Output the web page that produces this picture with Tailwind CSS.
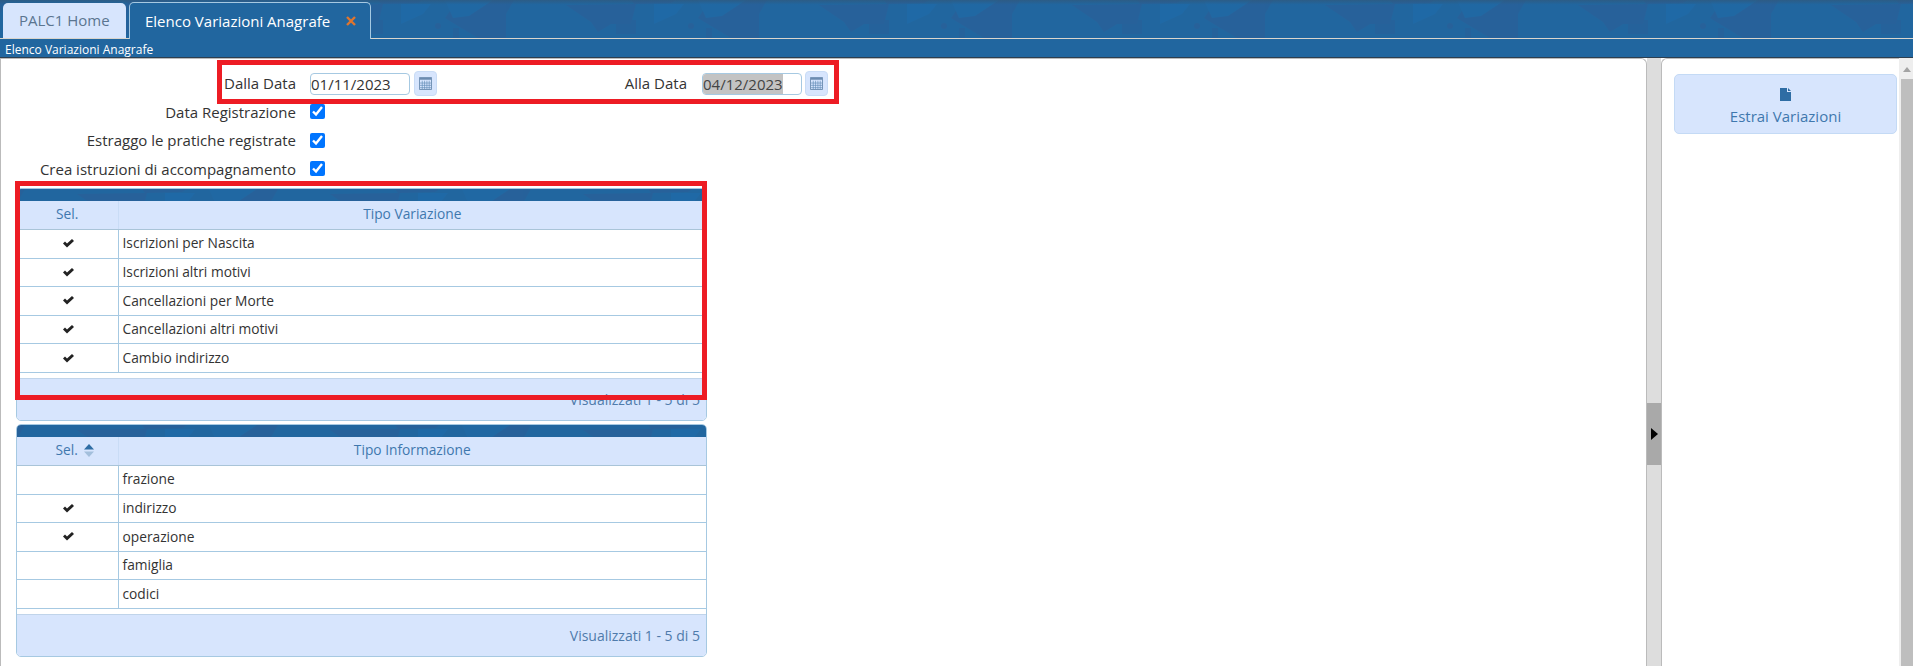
<!DOCTYPE html>
<html lang="it">
<head>
  <meta charset="UTF-8">
  <title>Elenco Variazioni Anagrafe</title>
  <script src="https://cdn.jsdelivr.net/npm/@tailwindcss/browser@4"></script>
</head>
<body class="h-[666px] w-full overflow-hidden bg-white font-['Open_Sans','Noto_Sans',sans-serif] text-[15px] text-[#333]">
  <!-- shared defs: banner texture, icons -->
  <svg width="0" height="0" class="absolute">
    <defs>
      <pattern id="tex" width="253" height="38" patternUnits="userSpaceOnUse">
        <rect width="253" height="38" fill="#21669f"/>
        <polygon points="0,0 8,0 0,14" fill="#26619a"/>
        <polygon points="60,5 130,4 125,24 105,24 92,32 85,22" fill="#27619a"/>
        <polygon points="125,0 170,0 165,3 128,4" fill="#27619a"/>
        <polygon points="110,20 130,20 130,34 110,34" fill="#27619a" opacity=".7"/>
        <polygon points="148,4 178,4 170,14 148,24" fill="#1f69a6"/>
        <polygon points="205,0 253,0 253,38 225,38 205,26 192,18" fill="#27619a"/>
        <polygon points="192,0 240,0 216,16 200,18" fill="#2068a3"/>
        <circle cx="185" cy="26" r="3" fill="#27619a"/>
        <rect x="200" y="28" width="6" height="10" fill="#27619a" opacity=".7"/>
      </pattern>
      <linearGradient id="shade" x1="0" y1="0" x2="0" y2="1">
        <stop offset="0" stop-color="#2f5a80" stop-opacity=".8"/>
        <stop offset=".12" stop-color="#2f5a80" stop-opacity="0"/>
      </linearGradient>
      <symbol id="ok" viewBox="0 0 11 9">
        <path d="M0 4.6 2 2.6 4 4.6 9 0 11 2 4 8.6Z" fill="#222"/>
      </symbol>
      <symbol id="cal" viewBox="0 0 14 14">
        <path d="M.5 .5h13v13H.5z" fill="#d7e5fd" stroke="#6b8bb0"/>
        <path d="M1 1h12v2H1z" fill="#6b8bb0"/>
        <path d="M1 6.500h12M1 9h12M1 11.500h12M3.500 4v9M6 4v9M8.500 4v9M11 4v9" stroke="#5f8ab5" stroke-width=".7" fill="none"/>
      </symbol>
    </defs>
  </svg>

  <header class="h-[58px] bg-[#21669f] border-b border-[#2d3f50]">
    <div class="relative h-[39px] border-b border-[#d9d5cd]">
      <svg class="absolute inset-0 w-full h-[38px]"><rect width="100%" height="38" fill="url(#tex)"/><rect width="100%" height="38" fill="url(#shade)"/></svg>
      <div class="relative flex items-end gap-[3px] h-[39px] pl-[3px]">
        <div class="flex items-center h-[36px] w-[123px] pl-[16px] rounded-t-[5px] bg-[#d7e5fd] text-[#5b7590] border-b border-[#d9d5cd]">PALC1 Home</div>
        <div class="flex items-center h-[37px] w-[242px] pl-[15px] rounded-t-[5px] border border-b-0 border-[#a6c9e2] bg-[#21669f] text-white">
          Elenco Variazioni Anagrafe
          <svg class="ml-[16px]" width="10" height="10" viewBox="0 0 10 10"><path d="M1 1 9 9M9 1 1 9" stroke="#e0752e" stroke-width="2.400"/></svg>
        </div>
      </div>
    </div>
    <div class="h-[18px] pl-[5px] text-[12px] leading-[21px] text-white">Elenco Variazioni Anagrafe</div>
  </header>

  <main class="relative flex h-[608px]">
    <!-- left panel -->
    <section class="w-[1647px] h-full border-l border-r border-t border-[#bbbbbb] rounded-tr-[6px] overflow-hidden">
      <div class="flex items-center h-[25px] mt-[12px]">
        <label class="w-[295px] text-right">Dalla Data</label>
        <div class="ml-[14px] w-[100px] h-[22px] rounded-[4px] border border-[#a6c9e2] leading-[21px]">01/11/2023</div>
        <button class="ml-[4px] w-[23px] h-[25px] flex items-center justify-center rounded-[4px] bg-[#d7e5fd] border border-[#c9dcf6]"><svg width="13" height="13"><use href="#cal"/></svg></button>
        <label class="w-[250px] text-right">Alla Data</label>
        <div class="ml-[15px] w-[100px] h-[22px] rounded-[4px] border border-[#a6c9e2] leading-[20px] overflow-hidden"><span class="inline-block h-[20px] bg-[#c3c3c3] text-[#444]">04/12/2023</span></div>
        <button class="ml-[3px] w-[23px] h-[25px] flex items-center justify-center rounded-[4px] bg-[#d7e5fd] border border-[#c9dcf6]"><svg width="13" height="13"><use href="#cal"/></svg></button>
      </div>
      <div class="flex items-center h-[28.5px] mt-[1.500px]">
        <label class="w-[295px] text-right">Data Registrazione</label>
        <input type="checkbox" checked class="ml-[14px] w-[15px] h-[15px] m-0">
      </div>
      <div class="flex items-center h-[28.5px]">
        <label class="w-[295px] text-right">Estraggo le pratiche registrate</label>
        <input type="checkbox" checked class="ml-[14px] w-[15px] h-[15px] m-0">
      </div>
      <div class="flex items-center h-[28.5px]">
        <label class="w-[295px] text-right">Crea istruzioni di accompagnamento</label>
        <input type="checkbox" checked class="ml-[14px] w-[15px] h-[15px] m-0">
      </div>

      <!-- griglia tipo variazione -->
      <div class="ml-[15px] mt-[4.500px] w-[691px] h-[233px] flex flex-col rounded-[5px] border border-[#a6c9e2] overflow-hidden">
        <svg class="w-full h-[12px] shrink-0"><rect width="100%" height="12" fill="url(#tex)"/></svg>
        <table class="w-full table-fixed border-collapse shrink-0 text-[13.75px]">
          <thead>
            <tr class="h-[29px] bg-[#d7e5fd] text-[#3f78ae]">
              <th class="w-[101px] font-normal border-r border-[#c9dcf6] border-b border-b-[#a9c4d8]">Sel.</th>
              <th class="font-normal border-b border-[#a9c4d8]">Tipo Variazione</th>
            </tr>
          </thead>
          <tbody>
            <tr class="h-[28.6px] border-b border-[#a6c9e2]"><td class="pl-[2px] border-r border-[#a6c9e2]"><svg class="mx-auto" width="11" height="9"><use href="#ok"/></svg></td><td class="pl-[4px]">Iscrizioni per Nascita</td></tr>
            <tr class="h-[28.6px] border-b border-[#a6c9e2]"><td class="pl-[2px] border-r border-[#a6c9e2]"><svg class="mx-auto" width="11" height="9"><use href="#ok"/></svg></td><td class="pl-[4px]">Iscrizioni altri motivi</td></tr>
            <tr class="h-[28.6px] border-b border-[#a6c9e2]"><td class="pl-[2px] border-r border-[#a6c9e2]"><svg class="mx-auto" width="11" height="9"><use href="#ok"/></svg></td><td class="pl-[4px]">Cancellazioni per Morte</td></tr>
            <tr class="h-[28.6px] border-b border-[#a6c9e2]"><td class="pl-[2px] border-r border-[#a6c9e2]"><svg class="mx-auto" width="11" height="9"><use href="#ok"/></svg></td><td class="pl-[4px]">Cancellazioni altri motivi</td></tr>
            <tr class="h-[28.6px] border-b border-[#a6c9e2]"><td class="pl-[2px] border-r border-[#a6c9e2]"><svg class="mx-auto" width="11" height="9"><use href="#ok"/></svg></td><td class="pl-[4px]">Cambio indirizzo</td></tr>
          </tbody>
        </table>
        <div class="mt-auto h-[42px] flex items-center justify-end pr-[6px] bg-[#d7e5fd] border-t border-[#c0d4ea] text-[14px] text-[#4f7bab]">Visualizzati 1 - 5 di 5</div>
      </div>

      <!-- griglia tipo informazione -->
      <div class="ml-[15px] mt-[3px] w-[691px] h-[233px] flex flex-col rounded-[5px] border border-[#a6c9e2] overflow-hidden">
        <svg class="w-full h-[12px] shrink-0"><rect width="100%" height="12" fill="url(#tex)"/></svg>
        <table class="w-full table-fixed border-collapse shrink-0 text-[13.75px]">
          <thead>
            <tr class="h-[29px] bg-[#d7e5fd] text-[#3f78ae]">
              <th class="w-[101px] font-normal border-r border-[#c9dcf6] border-b border-b-[#a9c4d8]">
                <span class="inline-flex items-center gap-[6px] ml-[15px]">Sel.
                  <svg width="10" height="13" viewBox="0 0 10 13"><path d="M5 0 10 5.500H0Z" fill="#2e6da4"/><path d="M0 7.500H10L5 13Z" fill="#a3bfdc"/></svg>
                </span>
              </th>
              <th class="font-normal border-b border-[#a9c4d8]">Tipo Informazione</th>
            </tr>
          </thead>
          <tbody>
            <tr class="h-[28.6px] border-b border-[#a6c9e2]"><td class="border-r border-[#a6c9e2]"></td><td class="pl-[4px]">frazione</td></tr>
            <tr class="h-[28.6px] border-b border-[#a6c9e2]"><td class="pl-[2px] border-r border-[#a6c9e2]"><svg class="mx-auto" width="11" height="9"><use href="#ok"/></svg></td><td class="pl-[4px]">indirizzo</td></tr>
            <tr class="h-[28.6px] border-b border-[#a6c9e2]"><td class="pl-[2px] border-r border-[#a6c9e2]"><svg class="mx-auto" width="11" height="9"><use href="#ok"/></svg></td><td class="pl-[4px]">operazione</td></tr>
            <tr class="h-[28.6px] border-b border-[#a6c9e2]"><td class="border-r border-[#a6c9e2]"></td><td class="pl-[4px]">famiglia</td></tr>
            <tr class="h-[28.6px] border-b border-[#a6c9e2]"><td class="border-r border-[#a6c9e2]"></td><td class="pl-[4px]">codici</td></tr>
          </tbody>
        </table>
        <div class="mt-auto h-[42px] flex items-center justify-end pr-[6px] bg-[#d7e5fd] border-t border-[#c0d4ea] text-[14px] text-[#4f7bab]">Visualizzati 1 - 5 di 5</div>
      </div>
    </section>

    <!-- splitter -->
    <div class="w-[14px] h-full bg-[#dddddd]">
      <div class="w-full h-[62px] mt-[345px] bg-[#a9a9a9] flex items-center pl-[4px]">
        <svg width="7" height="12" viewBox="0 0 7 12"><path d="M0 0 7 6 0 12Z" fill="#000"/></svg>
      </div>
    </div>

    <!-- right panel -->
    <aside class="w-[238px] h-full border-l border-t border-[#bbbbbb] rounded-tl-[6px] pt-[15px] pl-[12px]">
      <button class="w-[223px] h-[60px] pt-[6px] flex flex-col items-center justify-center gap-[5px] rounded-[5px] bg-[#d7e5fd] border border-[#c4daf5] text-[#3f78ae]">
        <svg width="11" height="13" viewBox="0 0 11 13"><path d="M0 0H7V4H11V13H0Z" fill="#2e6da4"/><path d="M8 0 11 3H8Z" fill="#2e6da4"/></svg>
        <span class="leading-[20px]">Estrai Variazioni</span>
      </button>
    </aside>

    <!-- scrollbar -->
    <div class="w-[14px] h-full flex flex-col bg-[#eeeeee] pl-[2px]">
      <div class="h-[21px] flex justify-center pt-[9px]">
        <svg width="8" height="5" viewBox="0 0 8 5"><path d="M4 0 8 5H0Z" fill="#a3a3a3"/></svg>
      </div>
      <div class="flex-1 bg-[#bebebe]"></div>
    </div>

    <!-- evidenziazioni rosse sopra lo screenshot -->
    <div class="absolute left-[217px] top-[2px] w-[622px] h-[44px] border-[5px] border-[#ed1c24]"></div>
    <div class="absolute left-[15px] top-[123px] w-[692px] h-[219px] border-[5px] border-[#ed1c24]"></div>
  </main>
</body>
</html>
